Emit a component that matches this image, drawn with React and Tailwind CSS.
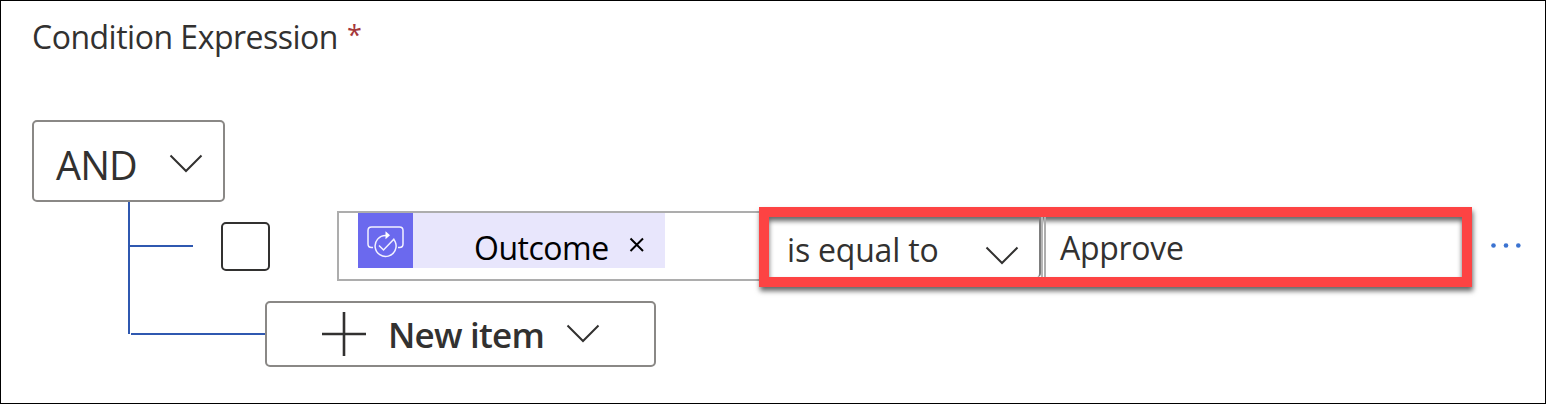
import React from 'react';

function Chevron({ className }) {
  return (
    <svg className={className} width="34" height="20" viewBox="0 0 34 20" fill="none" stroke="#323130" strokeWidth="2">
      <path d="M1.5 1.5 L17 17 L32.5 1.5" />
    </svg>
  );
}

function ApprovalIcon() {
  return (
    <svg width="55" height="55" viewBox="0 0 55 55" fill="none" stroke="#f3f2ff" strokeWidth="1.5">
      <path d="M15 34.5H13.5Q10 34.5 10 31V17.5Q10 14 13.5 14H41.5Q45 14 45 17.5V31Q45 34.5 41.5 34.5H40" />
      <path d="M29 22.5H27.5A10.5 10.5 0 1 0 37.3 29L35.8 26.3L25.5 37L21 32.5" />
      <path d="M27.5 18.3L32 22.3L27.5 26.3Z" fill="#fff" stroke="none" />
    </svg>
  );
}

export default function App() {
  return (
    <main className="flex h-[404px] w-[1546px] flex-col items-start overflow-hidden border border-black bg-white pl-[31px] font-['Open_Sans','Noto_Sans',sans-serif] text-[#323130]">
      <label className="flex h-[119px] pt-[14px] text-[32px] leading-[44px] whitespace-pre">
        <span className="tracking-[-0.5px]">Condition Expression</span>
        <span className="ml-[9px] text-[27px] leading-[40px] text-[#a4373a]">*</span>
      </label>

      <button className="flex h-[82px] w-[193px] shrink-0 items-center rounded-[5px] border-2 border-[#8a8886] pl-[22px]">
        <span className="w-[113px] pt-[8px] text-left text-[39.5px] leading-[50px] tracking-[-0.8px]">AND</span>
        <Chevron className="mt-[5px]" />
      </button>

      <div className="ml-[96px] flex">
        <div className="h-[132px] w-[2px] bg-[#2f58b0]" />
        <div className="flex flex-col">
          <div className="flex h-[99px] items-start pt-[5px]">
            <div className="mt-[38px] h-[2px] w-[63px] bg-[#2f58b0]" />
            <div className="mt-[15px] ml-[28px] h-[49px] w-[49px] rounded-[5px] border-2 border-[#323130]" />
            <div className="mt-[4px] ml-[67px] flex h-[70px] w-[422px] border-2 border-r-0 border-[#adadad] pl-[19px]">
              <div className="flex h-[55px] w-[307px] bg-[#e8e6fc]">
                <div className="h-[55px] w-[55px] bg-[#6b69ee]">
                  <ApprovalIcon />
                </div>
                <span className="ml-[61px] w-[155px] pt-[13px] text-[32px] leading-[44px] tracking-[-0.5px] text-black">Outcome</span>
                <svg className="mt-[24px]" width="16" height="16" viewBox="0 0 16 16" stroke="#000" strokeWidth="2">
                  <path d="M1.5 1.5L14 14M14 1.5L1.5 14" />
                </svg>
              </div>
            </div>
            <div className="flex h-[80px] w-[713px] border-[10px] border-[#fd4343] shadow-[1px_4px_5px_rgba(0,0,0,0.6),inset_0px_4px_5px_rgba(0,0,0,0.6)]">
              <div className="flex h-[60px] w-[272px] rounded-br-[4px] border-r-2 border-[#7d7d7d] pl-[18px]">
                <span className="w-[198px] pt-[11px] text-[32px] leading-[44px] tracking-[-0.2px]">is equal to</span>
                <Chevron className="mt-[29px]" />
              </div>
              <div className="h-[60px] w-[2px] bg-[#b5b5b5]" />
              <div className="ml-px h-[60px] w-[2px] bg-[#adadad]" />
              <span className="ml-[14px] pt-[9px] text-[32px] leading-[44px] tracking-[-0.3px]">Approve</span>
            </div>
            <svg className="mt-[36px] ml-[19px]" width="32" height="6" viewBox="0 0 32 6" fill="#3b73d1">
              <circle cx="2.5" cy="2.5" r="2.3" />
              <circle cx="15" cy="2.5" r="2.3" />
              <circle cx="27.3" cy="2.5" r="2.3" />
            </svg>
          </div>

          <div className="flex items-start">
            <div className="mt-[32px] ml-px h-[2px] w-[134px] bg-[#2f58b0]" />
            <button className="flex h-[66px] w-[391px] rounded-[5px] border-2 border-[#8a8886] pl-[55px]">
              <svg className="mt-[9px]" width="44" height="44" viewBox="0 0 44 44" stroke="#323130" strokeWidth="2.6">
                <path d="M22 0V44M0 22H44" />
              </svg>
              <span className="ml-[22px] w-[178px] pt-[10px] text-left text-[35px] leading-[44px] font-semibold tracking-[-0.8px] whitespace-nowrap">New item</span>
              <Chevron className="mt-[21px]" />
            </button>
          </div>
        </div>
      </div>
    </main>
  );
}
